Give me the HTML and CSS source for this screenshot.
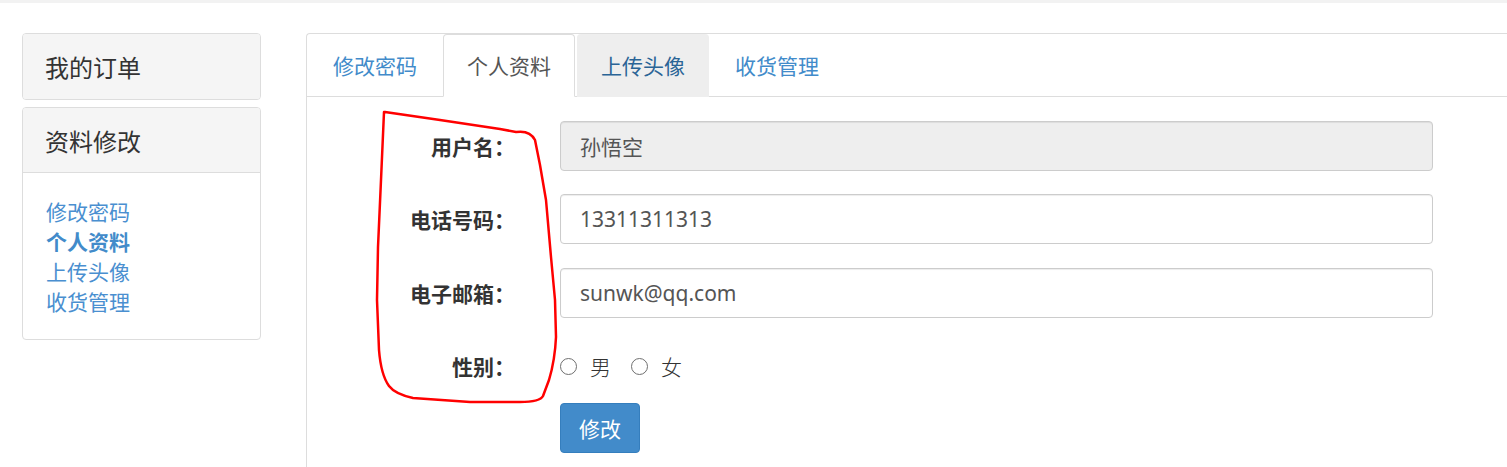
FILE: index.html
```
<!DOCTYPE html>
<html lang="zh-CN">
<head>
<meta charset="utf-8">
<title>个人资料</title>
<link rel="stylesheet" href="styles.css">
</head>
<body>
<div class="topbar"></div>
<div class="container">
  <aside class="sidebar">
    <div class="panel">
      <div class="panel-heading">我的订单</div>
    </div>
    <div class="panel">
      <div class="panel-heading with-body">资料修改</div>
      <div class="panel-body">
        <a class="side-link" href="#">修改密码</a>
        <a class="side-link active" href="#">个人资料</a>
        <a class="side-link" href="#">上传头像</a>
        <a class="side-link" href="#">收货管理</a>
      </div>
    </div>
  </aside>
  <main class="main-panel">
    <ul class="nav-tabs">
      <li class="tab"><a href="#">修改密码</a></li>
      <li class="tab active"><a href="#">个人资料</a></li>
      <li class="tab hover"><a href="#">上传头像</a></li>
      <li class="tab"><a href="#">收货管理</a></li>
    </ul>
    <form class="form">
      <div class="form-row">
        <label class="form-label">用户名：</label>
        <div class="form-field"><input class="form-control" type="text" value="孙悟空" disabled></div>
      </div>
      <div class="form-row">
        <label class="form-label">电话号码：</label>
        <div class="form-field"><input class="form-control" type="text" value="13311311313"></div>
      </div>
      <div class="form-row">
        <label class="form-label">电子邮箱：</label>
        <div class="form-field"><input class="form-control" type="text" value="sunwk@qq.com"></div>
      </div>
      <div class="form-row radio-row">
        <label class="form-label">性别：</label>
        <div class="form-field radios">
          <label class="radio"><span class="radio-dot"></span>男</label>
          <label class="radio"><span class="radio-dot"></span>女</label>
        </div>
      </div>
      <div class="form-row button-row">
        <div class="form-label"></div>
        <div class="form-field"><button class="btn" type="button">修改</button></div>
      </div>
    </form>
  </main>
</div>
<svg class="annotation" width="1507" height="467" viewBox="0 0 1507 467">
  <path d="M385 112 L440 120 L500 129 L516 132 Q530 130 535 140 L540 165 L546 200 L551 257 L555 300 L556 337 Q555 360 549 380 L543 396 Q540 402 520 402 L470 402 L413 398 Q395 394 389 386 Q381 375 379 350 L377 300 L378 247 L381 180 L384 112"
        fill="none" stroke="#ff0000" stroke-width="2.5" stroke-linejoin="round" stroke-linecap="round"/>
</svg>
</body>
</html>
```
FILE: styles.css
```
* { box-sizing: border-box; }

html, body {
  margin: 0;
  padding: 0;
  background: #ffffff;
  overflow: hidden;
}

body {
  position: relative;
  width: 1507px;
  height: 467px;
  font-family: "Noto Sans", "Noto Sans CJK SC", sans-serif;
  color: #333333;
}

.topbar {
  height: 3px;
  background: #f2f2f2;
}

.container {
  display: flex;
  gap: 45px;
  padding: 30px 0 0 22px;
}

.sidebar {
  flex: 0 0 239px;
  display: flex;
  flex-direction: column;
  gap: 7px;
}

.panel {
  border: 1px solid #dddddd;
  border-radius: 4px;
  background: #ffffff;
  overflow: hidden;
}

.panel-heading {
  background: #f5f5f5;
  padding: 16px 22px;
  font-size: 24px;
  line-height: 33px;
  color: #333333;
  font-family: "Noto Sans CJK SC", sans-serif;
}

.panel-heading.with-body {
  border-bottom: 1px solid #dddddd;
  padding-bottom: 15px;
}

.panel-body {
  padding: 23px 23px;
  display: flex;
  flex-direction: column;
}

.side-link {
  font-family: "Noto Sans CJK SC", sans-serif;
  font-size: 21px;
  line-height: 30px;
  color: #4a8fd0;
  text-decoration: none;
}

.side-link.active {
  font-weight: 700;
  color: #428bca;
}

.main-panel {
  flex: 0 0 1260px;
  height: 434px;
  border-top: 1px solid #dddddd;
  border-left: 1px solid #dddddd;
  border-top-left-radius: 4px;
}

.nav-tabs {
  list-style: none;
  margin: 0;
  padding: 0 0 0 2px;
  display: flex;
  border-bottom: 1px solid #dddddd;
}

.tab {
  margin-right: 2px;
  margin-bottom: -1px;
}

.tab a {
  display: block;
  padding: 16px 23px 17px;
  font-family: "Noto Sans CJK SC", sans-serif;
  font-size: 21px;
  line-height: 28px;
  color: #428bca;
  text-decoration: none;
  border: 1px solid transparent;
  border-radius: 4px 4px 0 0;
}

.tab.active a {
  color: #555555;
  background: #ffffff;
  border-color: #dddddd #dddddd transparent;
}

.tab.hover a {
  background: #eeeeee;
  border-color: #eeeeee #eeeeee transparent;
  color: #2a6496;
}

.form {
  padding-top: 24px;
}

.form-row {
  display: flex;
  align-items: center;
  height: 50px;
  margin-bottom: 23px;
}

.form-row:nth-child(2) { margin-bottom: 24px; }

.radio-row {
  margin-bottom: 12px;
}

.form-label {
  flex: 0 0 229px;
  text-align: right;
  padding-right: 21px;
  font-family: "Noto Sans CJK SC", sans-serif;
  font-size: 21px;
  font-weight: 700;
  color: #333333;
}

.form-field {
  flex: 0 0 auto;
  padding-left: 24px;
}

.form-control {
  display: block;
  width: 873px;
  height: 50px;
  padding: 0 19px;
  border: 1px solid #cccccc;
  border-radius: 4px;
  background: #ffffff;
  color: #555555;
  font-family: "Noto Sans", "Noto Sans CJK SC", sans-serif;
  font-size: 21px;
  box-shadow: inset 0 1px 1px rgba(0, 0, 0, 0.075);
  outline: none;
}

.form-control:disabled {
  background: #eeeeee;
  opacity: 1;
  -webkit-text-fill-color: #555555;
}

.radios {
  display: flex;
  align-items: center;
  gap: 20px;
}

.radio {
  display: flex;
  align-items: center;
  gap: 13px;
  font-family: "Noto Sans CJK SC", sans-serif;
  font-size: 21px;
  font-weight: 300;
  color: #333333;
}

.radio-dot {
  width: 17px;
  height: 17px;
  border: 1.5px solid #6f6f6f;
  border-radius: 50%;
  background: #ffffff;
}

.btn {
  width: 80px;
  height: 50px;
  border: 1px solid #357ebd;
  border-radius: 4px;
  background: #428bca;
  color: #ffffff;
  font-family: "Noto Sans CJK SC", sans-serif;
  font-size: 21px;
  padding: 0;
}

.annotation {
  position: absolute;
  left: 0;
  top: 0;
  pointer-events: none;
}
```
